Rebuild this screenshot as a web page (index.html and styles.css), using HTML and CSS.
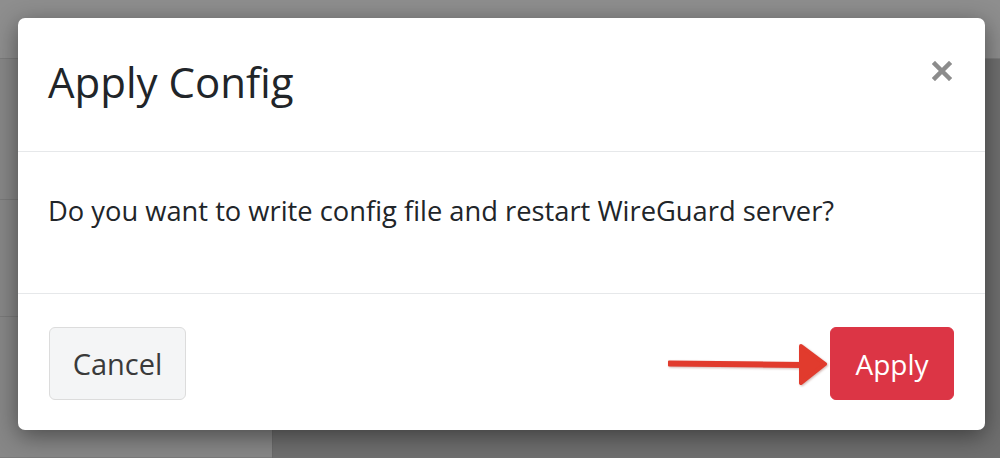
FILE: index.html
```html
<!DOCTYPE html>
<html lang="en">
  <head>
    <meta charset="UTF-8" />
    <meta name="viewport" content="width=device-width, initial-scale=1.0" />
    <title>Apply Config</title>
    <link rel="stylesheet" href="styles.css">
  </head>
  <body>
    <!-- page behind the backdrop -->
    <div class="page">
      <div class="topbar"></div>
      <div class="page-main">
        <div class="sidebar">
          <div class="side-row"></div>
          <div class="side-row"></div>
          <div class="side-row"></div>
        </div>
        <div class="content"></div>
      </div>
    </div>

    <div class="modal">
      <div class="modal-header">
        <h2 class="modal-title">Apply Config</h2>
        <button class="close" aria-label="Close">
          <svg width="20" height="20" viewBox="0 0 20 20">
            <path d="M3 3 L17 17 M17 3 L3 17" stroke="#8c8c8c" stroke-width="4.5" stroke-linecap="square" />
          </svg>
        </button>
      </div>

      <div class="modal-body">
        <p>Do you want to write config file and restart WireGuard server?</p>
      </div>

      <div class="modal-footer">
        <button class="btn btn-cancel">Cancel</button>
        <svg class="arrow" width="164" height="44" viewBox="0 0 164 44">
          <path d="M4 19.5 L138 21 L138 25 L4 23.5 Z" fill="#e13b2d" stroke="#e13b2d" stroke-width="2" stroke-linejoin="round" />
          <path d="M136 4 L160 22 L136 41 Z" fill="#e13b2d" stroke="#e13b2d" stroke-width="4" stroke-linejoin="round" />
        </svg>
        <button class="btn btn-apply">Apply</button>
      </div>
    </div>
  </body>
</html>
```

FILE: styles.css
```css
body {
  margin: 0;
  font-family: "Open Sans", "Noto Sans", sans-serif;
  background-color: #8d8d8d;
  overflow: hidden;
}

.page {
  height: 458px;
  display: flex;
  flex-direction: column;
}

.topbar {
  height: 71px;
  background-color: #8e8e8e;
  border-bottom: 1px solid #7c7c7c;
}

.page-main {
  flex: 1;
  display: flex;
}

.sidebar {
  width: 272px;
  background-color: #878787;
  border-right: 1px solid #6a6a6a;
}

.side-row {
  height: 140px;
  border-bottom: 1px solid #7a7a7a;
}

.side-row:nth-child(2) {
  height: 116px;
}

.content {
  flex: 1;
  background-color: #6f6f6f;
}

.modal {
  position: absolute;
  left: 18px;
  top: 18px;
  width: 967px;
  height: 412px;
  background-color: #fff;
  border-radius: 7px;
  box-shadow: 0 6px 24px rgba(0, 0, 0, 0.45);
  display: flex;
  flex-direction: column;
}

.modal-header {
  height: 134px;
  padding: 0 33px 0 30px;
  border-bottom: 1px solid #e6e8ea;
  display: flex;
  align-items: center;
  justify-content: space-between;
  box-sizing: border-box;
}

.modal-title {
  margin: 0 0 6px;
  font-size: 42px;
  font-weight: 400;
  color: #212529;
}

.close {
  border: none;
  background: none;
  padding: 0;
  margin-bottom: 27px;
  display: flex;
}

.modal-body {
  height: 142px;
  padding: 39px 30px 0;
  box-sizing: border-box;
  border-bottom: 1px solid #e6e8ea;
}

.modal-body p {
  margin: 0;
  font-size: 27.3px;
  line-height: 40px;
  color: #212529;
}

.modal-footer {
  flex: 1;
  display: flex;
  align-items: center;
  padding: 3px 31px 0 31px;
}

.btn {
  height: 73px;
  font-family: inherit;
  font-size: 28px;
  border-radius: 6px;
  cursor: pointer;
}

.btn-cancel {
  width: 137px;
  font-size: 29px;
  background-color: #f4f5f6;
  border: 1px solid #dcdcdc;
  color: #3a3a3a;
}

.arrow {
  margin-left: auto;
  margin-right: 1px;
  filter: drop-shadow(1px 1px 1px rgba(120, 40, 30, 0.35));
}

.btn-apply {
  width: 124px;
  background-color: #dc3545;
  border: 1px solid #dc3545;
  color: #fff;
}
```
